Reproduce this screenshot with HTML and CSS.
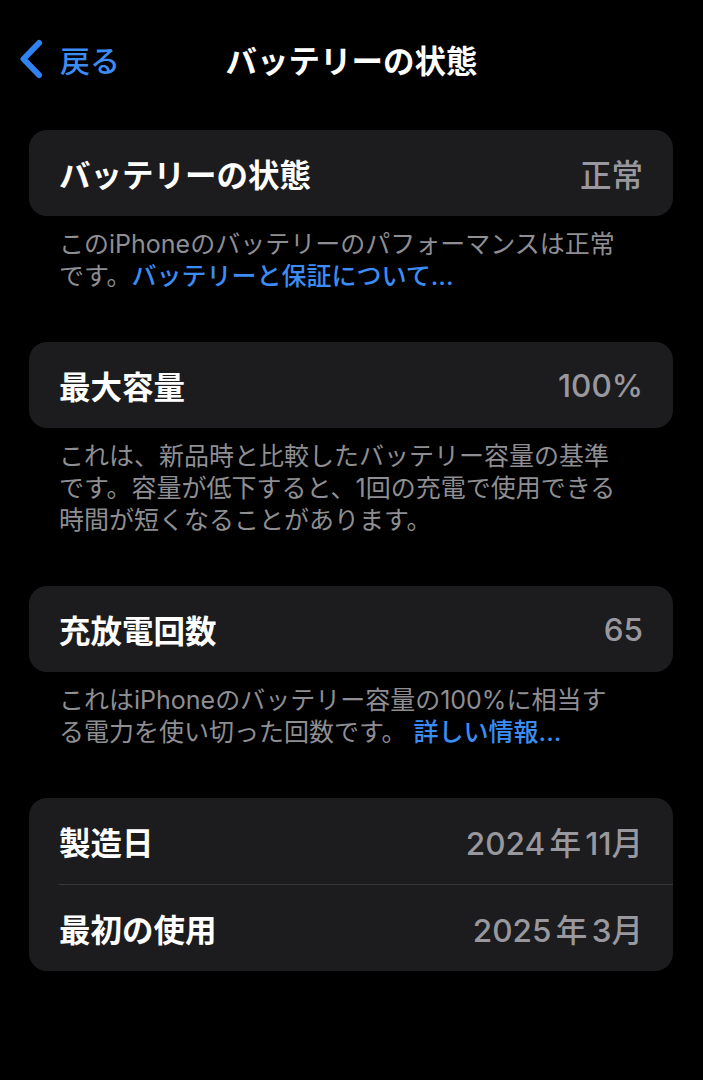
FILE: index.html
```html
<!DOCTYPE html>
<html lang="ja">
<head>
  <meta charset="UTF-8">
  <title>バッテリーの状態</title>
  <link rel="stylesheet" href="styles.css">
</head>
<body>

  <div class="nav">
    <a class="back" href="#">
      <svg class="chevron" width="26" height="40" viewBox="0 0 26 40">
        <path d="M21 4 L5.5 20 L21 36" fill="none" stroke="#2f83f0" stroke-width="6" stroke-linecap="round" stroke-linejoin="round"/>
      </svg>
      <span>戻る</span>
    </a>
    <div class="title">バッテリーの状態</div>
    <div></div>
  </div>

  <div class="content">
    <div class="card">
      <div class="row">
        <div class="row-inner">
          <span class="label">バッテリーの状態</span>
          <span class="value">正常</span>
        </div>
      </div>
    </div>
    <div class="note">このiPhoneのバッテリーのパフォーマンスは正常<br>です。<a href="#">バッテリーと保証について...</a></div>

    <div class="card">
      <div class="row">
        <div class="row-inner">
          <span class="label">最大容量</span>
          <span class="value">100%</span>
        </div>
      </div>
    </div>
    <div class="note">これは、新品時と比較したバッテリー容量の基準<br>です。容量が低下すると、1回の充電で使用できる<br>時間が短くなることがあります。</div>

    <div class="card">
      <div class="row">
        <div class="row-inner">
          <span class="label">充放電回数</span>
          <span class="value">65</span>
        </div>
      </div>
    </div>
    <div class="note">これはiPhoneのバッテリー容量の100%に相当す<br>る電力を使い切った回数です。 <a href="#">詳しい情報...</a></div>

    <div class="card">
      <div class="row">
        <div class="row-inner">
          <span class="label">製造日</span>
          <span class="value">2024 年 11月</span>
        </div>
      </div>
      <div class="row">
        <div class="row-inner">
          <span class="label">最初の使用</span>
          <span class="value">2025 年 3月</span>
        </div>
      </div>
    </div>
  </div>

</body>
</html>
```

FILE: styles.css
```css
body {
  font-family: "Inter", "Noto Sans CJK JP", sans-serif;
  background: #000000;
  color: #ffffff;
  margin: 0;
  padding: 0;
}

a {
  text-decoration: none;
  color: #3c8cf5;
}

.nav {
  display: grid;
  grid-template-columns: 1fr auto 1fr;
  align-items: center;
  height: 44px;
  margin-top: 36px;
  margin-bottom: 50px;
  padding: 0 18px;
}

.back {
  display: flex;
  align-items: center;
  gap: 16px;
  font-size: 30px;
  font-weight: 500;
  color: #3c8cf5;
}

.chevron {
  display: block;
}

.title {
  font-size: 31.5px;
  font-weight: 700;
}

.content {
  padding: 0 30px 0 29px;
}

.card {
  background: #1c1c1e;
  border-radius: 18px;
}

.row {
  padding-left: 30px;
}

.row-inner {
  display: flex;
  justify-content: space-between;
  align-items: center;
  height: 86px;
  padding-right: 30px;
  font-size: 31.5px;
}

.row:not(:last-child) .row-inner {
  border-bottom: 1px solid #38383a;
}

.label {
  font-weight: 700;
}

.value {
  color: #98989e;
  font-weight: 500;
  word-spacing: -4px;
}

.note {
  padding: 0 30px;
  margin: 12px 0 50px;
  font-size: 25px;
  line-height: 32px;
  color: #8e8e93;
  white-space: nowrap;
}

.note a {
  font-weight: 500;
}
```
